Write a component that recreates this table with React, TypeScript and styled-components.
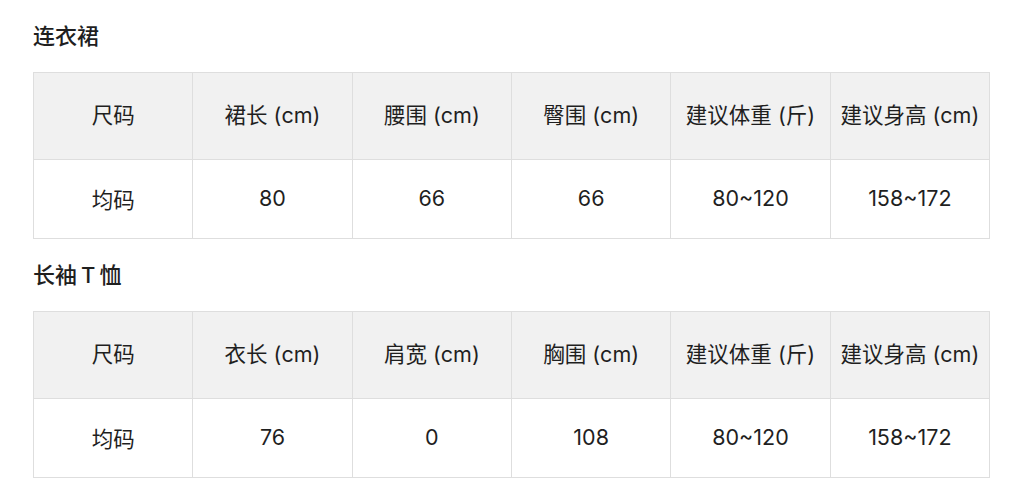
import * as React from 'react'
import styled, { createGlobalStyle } from 'styled-components'

const GlobalStyle = createGlobalStyle`
  body {
    margin: 0;
    background: #fff;
    color: #1f1f1f;
    font-family: Inter, "Noto Sans CJK SC", sans-serif;
  }
`

const Page = styled.div`
  padding: 21px 34px 0 33px;
`

const Section = styled.section`
  & + & {
    margin-top: 21px;
  }
`

const Title = styled.h2`
  font-size: 22px;
  font-weight: 500;
  line-height: 30px;
  margin: 0 0 21px;
`

// latin letters inside a CJK title get a little air, as the reference does
const Latin = styled.span`
  margin: 0 4px;
`

const Table = styled.table`
  border-collapse: collapse;
  table-layout: fixed;
  width: 957px;
`

const HeadCell = styled.th`
  background-color: #f1f1f1;
  border: 1px solid #dedede;
  box-sizing: border-box;
  font-size: 21.5px;
  font-weight: 400;
  height: 87px;
  padding: 0 0 5px;
  text-align: center;
  white-space: nowrap;
`

const BodyCell = styled.td`
  border: 1px solid #dedede;
  box-sizing: border-box;
  font-size: 21.5px;
  height: 79px;
  padding: 0 0 2px;
  text-align: center;
`

const tables = [
  {
    title: <>连衣裙</>,
    key: 'dress',
    head: ['尺码', '裙长 (cm)', '腰围 (cm)', '臀围 (cm)', '建议体重 (斤)', '建议身高 (cm)'],
    row: ['均码', '80', '66', '66', '80~120', '158~172'],
  },
  {
    title: <>长袖<Latin>T</Latin>恤</>,
    key: 'tshirt',
    head: ['尺码', '衣长 (cm)', '肩宽 (cm)', '胸围 (cm)', '建议体重 (斤)', '建议身高 (cm)'],
    row: ['均码', '76', '0', '108', '80~120', '158~172'],
  },
]

export default function App() {
  return <Page>
    <GlobalStyle />
    {tables.map(t => (
      <Section key={t.key}>
        <Title>{t.title}</Title>
        <Table>
          <thead>
            <tr>{t.head.map(h => <HeadCell key={h}>{h}</HeadCell>)}</tr>
          </thead>
          <tbody>
            <tr>{t.row.map((c, i) => <BodyCell key={i}>{c}</BodyCell>)}</tr>
          </tbody>
        </Table>
      </Section>
    ))}
  </Page>
}
